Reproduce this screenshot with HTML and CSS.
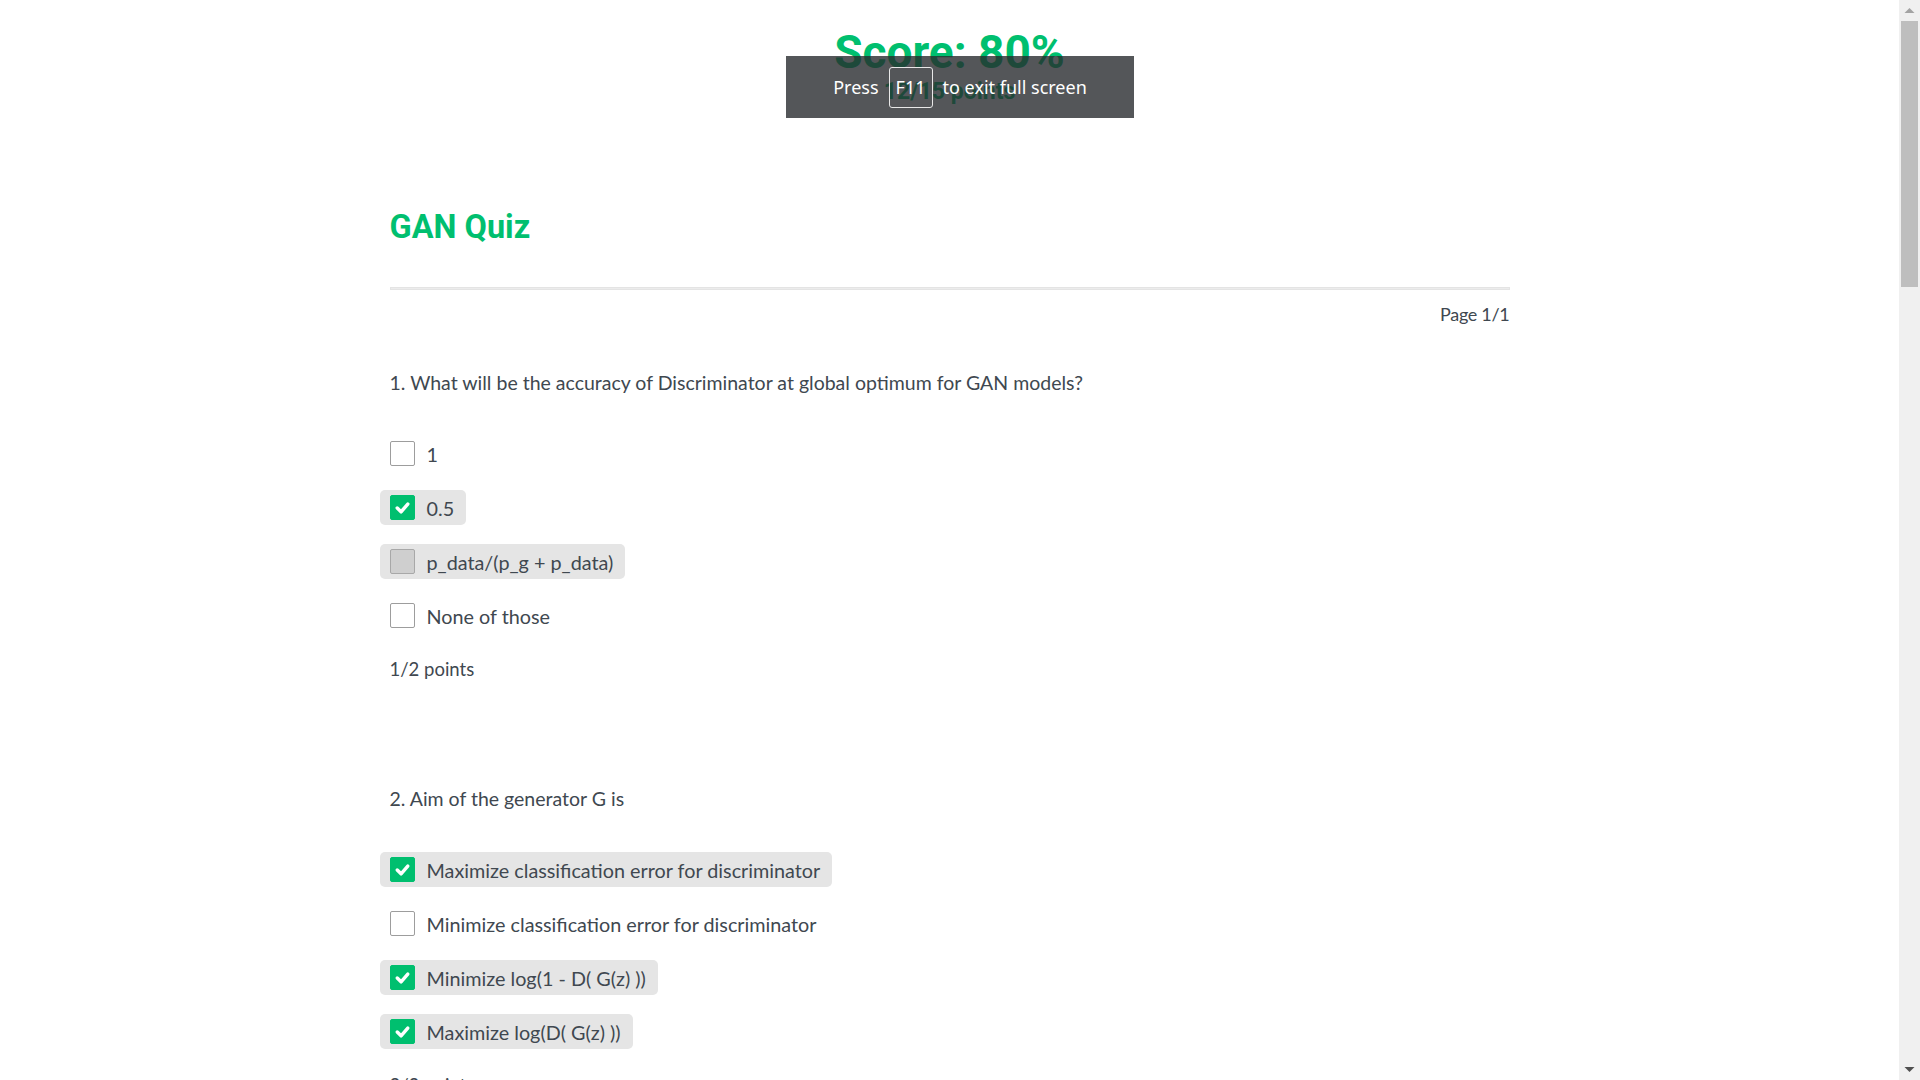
FILE: index.html
```html
<!DOCTYPE html>
<html lang="en">
<head>
<meta charset="utf-8">
<title>GAN Quiz</title>
<link rel="stylesheet" href="styles.css">
</head>
<body>
<div class="window">
  <main class="page">
    <header class="score-head">
      <div class="score">Score: 80%</div>
      <div class="score-points">12/15 points</div>
    </header>
    <section class="quiz">
      <h1 class="quiz-title">GAN Quiz</h1>
      <div class="rule"></div>
      <div class="page-num">Page 1/1</div>

      <div class="question">
        <div class="q-text">1. What will be the accuracy of Discriminator at global optimum for GAN models?</div>
        <div class="options">
          <div class="option"><span class="box"></span><span class="label">1</span></div>
          <div class="option sel"><span class="box on"><svg viewBox="0 0 24 24"><polyline points="6.5,12.5 10.5,16.5 17.5,8.5"/></svg></span><span class="label">0.5</span></div>
          <div class="option sel"><span class="box grey"></span><span class="label">p_data/(p_g + p_data)</span></div>
          <div class="option"><span class="box"></span><span class="label">None of those</span></div>
        </div>
        <div class="points">1/2 points</div>
      </div>

      <div class="question">
        <div class="q-text">2. Aim of the generator G is</div>
        <div class="options">
          <div class="option sel"><span class="box on"><svg viewBox="0 0 24 24"><polyline points="6.5,12.5 10.5,16.5 17.5,8.5"/></svg></span><span class="label">Maximize classification error for discriminator</span></div>
          <div class="option"><span class="box"></span><span class="label">Minimize classification error for discriminator</span></div>
          <div class="option sel"><span class="box on"><svg viewBox="0 0 24 24"><polyline points="6.5,12.5 10.5,16.5 17.5,8.5"/></svg></span><span class="label">Minimize log(1 - D( G(z) ))</span></div>
          <div class="option sel"><span class="box on"><svg viewBox="0 0 24 24"><polyline points="6.5,12.5 10.5,16.5 17.5,8.5"/></svg></span><span class="label">Maximize log(D( G(z) ))</span></div>
        </div>
        <div class="points">2/3 points</div>
      </div>
    </section>
  </main>
  <div class="scrollbar">
    <div class="sb-btn"><svg viewBox="0 0 21 21"><polygon points="5.5,13 10.5,8 15.5,13" fill="#a3a3a3"/></svg></div>
    <div class="sb-track"><div class="sb-thumb"></div></div>
    <div class="sb-btn"><svg viewBox="0 0 21 21"><polygon points="5.5,8 10.5,13 15.5,8" fill="#505050"/></svg></div>
  </div>
  <div class="fs-toast">Press <span class="key">F11</span> to exit full screen</div>
</div>
</body>
</html>
```

FILE: styles.css
```css
html, body {
  margin: 0;
  padding: 0;
  height: 100%;
  background: #fff;
}
.window {
  position: relative;
  display: flex;
  height: 100vh;
  overflow: hidden;
}
.page {
  flex: 1;
  overflow: hidden;
  font-family: "Lato", "Liberation Sans", sans-serif;
  color: #404850;
}
.score-head {
  text-align: center;
  padding-top: 26px;
  font-family: "Roboto", "Liberation Sans", sans-serif;
  color: #00bf6f;
  font-weight: 700;
}
.score {
  font-size: 46px;
  line-height: 52px;
}
.score-points {
  font-size: 23px;
  line-height: 28px;
}
.quiz {
  width: 1120px;
  margin: 0 auto;
}
.quiz-title {
  margin: 102px 0 0;
  font-family: "Roboto", "Liberation Sans", sans-serif;
  font-size: 32.5px;
  line-height: 38px;
  font-weight: 700;
  color: #00bf6f;
}
.rule {
  margin-top: 41px;
  height: 1px;
  background: #ececec;
  border: 1px solid #e4e4e4;
}
.page-num {
  margin-top: 12px;
  text-align: right;
  font-size: 18px;
  line-height: 24px;
  letter-spacing: -0.3px;
}
.question {
  margin-top: 45px;
}
.question + .question {
  margin-top: 106px;
}
.q-text {
  font-size: 19.5px;
  line-height: 24px;
}
.options {
  margin-top: 41px;
  display: flex;
  flex-direction: column;
  align-items: flex-start;
  gap: 19px;
}
.option {
  display: flex;
  align-items: center;
  gap: 12px;
  height: 35px;
  box-sizing: border-box;
  padding: 0 12px 0 10px;
  margin-left: -10px;
  border-radius: 5px;
  font-size: 19.8px;
}
.option.sel {
  background: #e5e5e5;
}
.box {
  width: 25px;
  height: 25px;
  box-sizing: border-box;
  border: 1px solid #9d9d9d;
  border-radius: 2px;
  background: #fff;
  flex: none;
  display: flex;
}
.box.on {
  background: #00bf6f;
  border-color: #00bf6f;
}
.box.grey {
  background: #cfcfcf;
  border-color: #a8a8a8;
}
.box svg {
  width: 100%;
  height: 100%;
}
.box polyline {
  fill: none;
  stroke: #fff;
  stroke-width: 3.6;
  stroke-linecap: round;
  stroke-linejoin: round;
}
.points {
  margin-top: 24px;
  font-size: 18.5px;
  line-height: 24px;
}
.scrollbar {
  width: 21px;
  flex: none;
  background: #f0f0f0;
  display: flex;
  flex-direction: column;
}
.sb-btn {
  height: 21px;
  flex: none;
}
.sb-btn svg {
  display: block;
  width: 21px;
  height: 21px;
}
.sb-track {
  flex: 1;
  padding: 0 2px;
}
.sb-thumb {
  height: 266px;
  background: #bebebe;
}
.fs-toast {
  position: absolute;
  top: 56px;
  left: 786px;
  width: 348px;
  height: 62px;
  box-sizing: border-box;
  background: rgba(38, 40, 44, 0.79);
  color: #fff;
  font-family: "Noto Sans", "Open Sans", sans-serif;
  font-size: 18px;
  display: flex;
  align-items: center;
  justify-content: center;
  gap: 10px;
}
.key {
  display: inline-flex;
  align-items: center;
  justify-content: center;
  width: 44px;
  height: 41px;
  box-sizing: border-box;
  border: 1.5px solid #e8e8e8;
  border-radius: 3px;
}
```
